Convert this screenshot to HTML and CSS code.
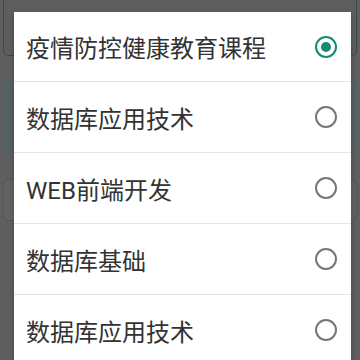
FILE: index.html
```html
<!DOCTYPE html>
<html lang="zh-CN">
<head>
  <meta charset="UTF-8">
  <title>选择课程</title>
  <link rel="stylesheet" href="styles.css">
</head>
<body>

<div class="page">
  <div class="bg-card card-top"></div>
  <div class="bg-card card-tint"></div>
  <div class="bg-card card-plain"></div>
</div>

<div class="dialog">
  <label class="option">
    <span class="option-text">疫情防控健康教育课程</span>
    <span class="radio checked"></span>
  </label>
  <label class="option">
    <span class="option-text">数据库应用技术</span>
    <span class="radio"></span>
  </label>
  <label class="option">
    <span class="option-text">WEB前端开发</span>
    <span class="radio"></span>
  </label>
  <label class="option">
    <span class="option-text">数据库基础</span>
    <span class="radio"></span>
  </label>
  <label class="option">
    <span class="option-text">数据库应用技术</span>
    <span class="radio"></span>
  </label>
</div>

</body>
</html>
```

FILE: styles.css
```css
body {
  margin: 0;
  width: 360px;
  height: 360px;
  overflow: hidden;
  background-color: #5f5f5f;
  font-family: Roboto, "Noto Sans CJK SC", sans-serif;
}
.page {
  display: flex;
  flex-direction: column;
  padding: 0 3px;
  gap: 23px;
}
.bg-card {
  border-radius: 5px;
}
.card-top {
  height: 64px;
  margin-top: -10px;
  border: 1px solid #3b4753;
  background-color: #5e5e5e;
}
.card-tint {
  height: 77px;
  background-color: #566163;
}
.card-plain {
  height: 40px;
  border: 1px solid #575757;
  background-color: #636363;
}
.dialog {
  position: absolute;
  left: 14px;
  top: 12px;
  width: 337px;
  background: white;
  box-shadow: 0 2px 6px rgba(0,0,0,0.25);
}
.option {
  display: flex;
  align-items: center;
  justify-content: space-between;
  height: 70px;
  padding: 0 14px 0 12px;
  border-top: 1px solid #e4e4e4;
  box-sizing: border-box;
}
.option:first-child {
  height: 69px;
  border-top: none;
}
.option + .option {
  height: 71px;
}
.option-text {
  font-size: 24px;
  color: #333;
}
.radio {
  width: 22px;
  height: 22px;
  border: 2px solid #767676;
  border-radius: 50%;
  box-sizing: border-box;
  display: flex;
  align-items: center;
  justify-content: center;
}
.radio.checked {
  border-color: #178a6f;
}
.radio.checked::after {
  content: "";
  width: 10px;
  height: 10px;
  border-radius: 50%;
  background-color: #178a6f;
}
```
